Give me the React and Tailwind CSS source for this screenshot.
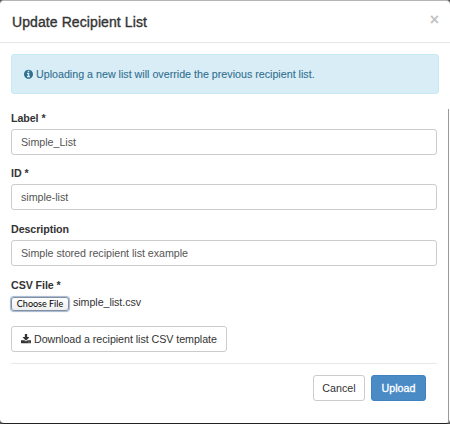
const DOWNLOAD =
  "M1280 1344q0-26-19-45t-45-19-45 19-19 45 19 45 45 19 45-19 19-45zm256 0q0-26-19-45t-45-19-45 19-19 45 19 45 45 19 45-19 19-45zm128-224v320q0 40-28 68t-68 28h-1472q-40 0-68-28t-28-68v-320q0-40 28-68t68-28h465l135 136q58 56 136 56t136-56l136-136h464q40 0 68 28t28 68zm-325-569q17 41-14 70l-448 448q-18 19-45 19t-45-19l-448-448q-31-29-14-70 17-39 59-39h256v-448q0-26 19-45t45-19h256q26 0 45 19t19 45v448h256q42 0 59 39z";
const INFO =
  "M1152 1376v-160q0-14-9-23t-23-9h-96v-512q0-14-9-23t-23-9h-320q-14 0-23 9t-9 23v160q0 14 9 23t23 9h96v320h-96q-14 0-23 9t-9 23v160q0 14 9 23t23 9h448q14 0 23-9t9-23zm-128-896v-160q0-14-9-23t-23-9h-192q-14 0-23 9t-9 23v160q0 14 9 23t23 9h192q14 0 23-9t9-23zm640 416q0 209-103 385.5t-279.5 279.5-385.5 103-385.5-103-279.5-279.5-103-385.5 103-385.5 279.5-279.5 385.5-103 385.5 103 279.5 279.5 103 385.5z";

function Field({ label, value, className, inputClass }) {
  return (
    <div className={className}>
      <div className="h-[14px] text-[10.7px] leading-[14px] font-bold tracking-[-0.08px] text-[#333]">{label}</div>
      <div className={`flex items-center rounded-[3px] border border-[#ccc] pl-[9px] text-[10.7px] tracking-[-0.03px] text-[#555] ${inputClass}`}>
        {value}
      </div>
    </div>
  );
}

export default function App() {
  return (
    <div className="h-[424px] w-[450px] overflow-hidden bg-[#555] font-['Liberation_Sans',Arial,sans-serif]">
      <div className="relative flex h-[424px] w-[450px] flex-col rounded-[4px] border-t border-b border-t-[#b5b5b5] border-b-[#222] bg-white">
        <div className="flex h-[42px] shrink-0 items-center justify-between border-b border-[#e5e5e5] pr-[11px] pl-[12px]">
          <h1 className="text-[14px] leading-[16px] tracking-[0.09px] text-[#333] [-webkit-text-stroke:0.35px_#333]">Update Recipient List</h1>
          <span className="-mt-[3px] text-[16px] leading-[16px] font-bold text-[#c4c4c4]">×</span>
        </div>
        <div className="flex flex-col pl-[11px]">
          <div className="mt-[11px] flex h-[40px] w-[428px] items-center rounded-[3px] border border-[#c6ebf3] bg-[#d9edf7] pl-[12px] text-[10.7px] text-[#31708f] [-webkit-text-stroke:0.1px_#31708f]">
            <svg className="mr-[3px] h-[10.5px] w-[9px]" viewBox="128 0 1536 1792" fill="currentColor"><path d={INFO} /></svg>
            <span>Uploading a new list will override the previous recipient list.</span>
          </div>
          <Field className="mt-[17px] w-[426px]" inputClass="mt-[4px] h-[26px]" label="Label *" value="Simple_List" />
          <Field className="mt-[11px] w-[426px]" inputClass="mt-[4px] h-[26px]" label="ID *" value="simple-list" />
          <Field className="mt-[12px] w-[426px]" inputClass="mt-[4px] h-[26px]" label="Description" value="Simple stored recipient list example" />
          <div className="mt-[12px] h-[14px] text-[10.7px] leading-[14px] font-bold tracking-[-0.08px] text-[#333]">CSV File *</div>
          <div className="mt-[5px] flex h-[14px]">
            <button className="h-[14px] w-[58px] rounded-[3px] border border-[#7f8fa5] bg-linear-to-b from-white to-[#eee] font-['Lato',sans-serif] text-[9px] leading-[12px] text-black shadow-[0_0_1px_1px_#a5b5cc]">Choose File</button>
            <span className="-mt-[2px] ml-[4px] text-[10.7px] leading-[14px] tracking-[-0.06px] text-[#333]">simple_list.csv</span>
          </div>
          <button className="mt-[15px] flex h-[26px] w-[216px] items-center rounded-[3px] border border-[#ccc] pl-[9px] text-[10.7px] tracking-[-0.03px] text-[#333]">
            <svg className="mr-[3px] h-[10px] w-[10px]" viewBox="0 0 1664 1664" fill="currentColor"><path d={DOWNLOAD} /></svg>
            <span className="tracking-[-0.05px]">Download a recipient list CSV template</span>
          </button>
          <div className="mt-[11px] h-px w-[426px] bg-[#e8e8e8]" />
          <div className="mt-[11px] flex w-[415px] justify-end gap-[6px] text-[10.7px]">
            <button className="h-[26px] w-[52px] rounded-[3px] border border-[#ccc] text-[#333]">Cancel</button>
            <button className="h-[26px] w-[55px] rounded-[3px] border border-[#3f83c0] bg-[#4a8bc6] text-white [-webkit-text-stroke:0.3px_white]">Upload</button>
          </div>
        </div>
        <div className="absolute top-[108px] left-[448px] h-[314px] w-px bg-[#999]" />
      </div>
    </div>
  );
}
